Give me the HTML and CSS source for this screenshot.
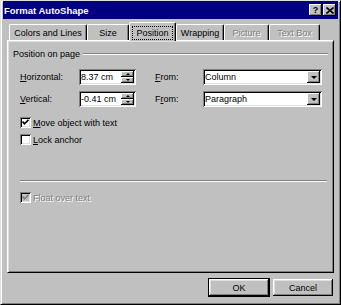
FILE: index.html
```html
<!DOCTYPE html>
<html>
<head>
<meta charset="utf-8">
<link rel="stylesheet" href="styles.css">
</head>
<body>
<div class="window">
  <div class="titlebar">
    <span class="title">Format AutoShape</span>
    <div class="tb-buttons">
      <span class="tb-btn help">?</span>
      <span class="tb-btn close"><svg width="8" height="7" viewBox="0 0 8 7"><path d="M0.5 0.5 L7.5 6.5 M7.5 0.5 L0.5 6.5" stroke="#000" stroke-width="1.6"/></svg></span>
    </div>
  </div>
  <div class="content">
    <div class="tabs">
      <div class="tab t-colors">Colors and Lines</div>
      <div class="tab t-size">Size</div>
      <div class="tab t-pos sel"><span class="focus">Position</span></div>
      <div class="tab t-wrap">Wrapping</div>
      <div class="tab t-pic disabled">Picture</div>
      <div class="tab t-text disabled">Text Box</div>
    </div>
    <div class="panel">
      <div class="group-head"><span>Position on page</span><div class="etch"></div></div>
      <div class="field-row first">
        <span class="lbl"><u>H</u>orizontal:</span>
        <div class="spin-field"><span class="val">8.37 cm</span>
          <div class="spinner"><div class="spin-btn"><i class="up"></i></div><div class="spin-btn"><i class="down"></i></div></div>
        </div>
        <span class="from"><u>F</u>rom:</span>
        <div class="combo"><span class="val">Column</span><div class="drop"><i class="down big"></i></div></div>
      </div>
      <div class="field-row second">
        <span class="lbl"><u>V</u>ertical:</span>
        <div class="spin-field"><span class="val">-0.41 cm</span>
          <div class="spinner"><div class="spin-btn"><i class="up"></i></div><div class="spin-btn"><i class="down"></i></div></div>
        </div>
        <span class="from">F<u>r</u>om:</span>
        <div class="combo"><span class="val">Paragraph</span><div class="drop"><i class="down big"></i></div></div>
      </div>
      <div class="check-row c1">
        <span class="cbox"><svg width="7" height="7" viewBox="0 0 7 7"><path d="M0.5 2.5 L2.5 4.8 L6.5 0.8" fill="none" stroke="#000" stroke-width="1.7"/></svg></span>
        <span><u>M</u>ove object with text</span>
      </div>
      <div class="check-row c2">
        <span class="cbox"></span>
        <span><u>L</u>ock anchor</span>
      </div>
      <div class="sep"></div>
      <div class="check-row c3 disabled">
        <span class="cbox dis"><svg width="7" height="7" viewBox="0 0 7 7"><path d="M0.5 2.5 L2.5 4.8 L6.5 0.8" fill="none" stroke="#808080" stroke-width="1.7"/></svg></span>
        <span>Float over text</span>
      </div>
    </div>
    <div class="buttons">
      <div class="btn default">OK</div>
      <div class="btn">Cancel</div>
    </div>
  </div>
</div>
</body>
</html>
```

FILE: styles.css
```css
* { box-sizing: border-box; }
body {
  margin: 0;
  background: #c0c0c0;
  font-family: "Liberation Sans", Arial, sans-serif;
  font-size: 9px;
  color: #000;
}
u { text-decoration: underline; text-underline-offset: 1px; }
.window {
  width: 341px;
  height: 305px;
  background: #c0c0c0;
  border: 1px solid;
  border-color: #dfdfdf #000 #000 #dfdfdf;
  box-shadow: inset 1px 1px #fff, inset -1px -1px #808080;
  padding: 0 2px 2px 2px;
  display: flex;
  flex-direction: column;
}
.titlebar {
  height: 18px;
  flex: none;
  background: #000080;
  display: flex;
  align-items: center;
  justify-content: space-between;
  padding: 0 2px 0 1px;
  color: #fff;
  font-weight: bold;
  font-size: 9.5px;
}
.tb-buttons { display: flex; gap: 1px; }
.tb-btn {
  width: 13px;
  height: 12px;
  background: #c0c0c0;
  color: #000;
  display: flex;
  align-items: center;
  justify-content: center;
  box-shadow: inset -1px -1px #000, inset 1px 1px #fff, inset -2px -2px #808080;
  font-size: 9px;
  font-weight: bold;
  line-height: 1;
}
.content {
  flex: 1;
  padding: 3px 4px 0 4px;
  display: flex;
  flex-direction: column;
}
.tabs {
  display: flex;
  align-items: flex-end;
  height: 18px;
  padding-left: 2px;
  flex: none;
}
.tab {
  height: 16px;
  display: flex;
  align-items: center;
  justify-content: center;
  border-left: 1px solid #fff;
  border-top: 1px solid #fff;
  border-right: 1px solid #000;
  border-top-left-radius: 2px;
  border-top-right-radius: 2px;
  box-shadow: inset -1px 0 #808080;
  background: #c0c0c0;
}
.t-colors { width: 78px; }
.t-size { width: 42px; }
.t-pos { width: 47px; }
.t-wrap { width: 48px; }
.t-pic { width: 45px; }
.t-text { width: 51px; }
.tab.sel {
  height: 19px;
  margin-bottom: -1px;
  padding-top: 1px;
  position: relative;
  z-index: 1;
}
.focus { outline: 1px dotted #000; padding: 1px 3px; }
.disabled, .tab.disabled { color: #808080; text-shadow: 1px 1px #fff; }
.panel {
  flex: none;
  height: 233px;
  border: 1px solid;
  border-color: #fff #000 #000 #fff;
  box-shadow: inset 1px 1px #dfdfdf, inset -1px -1px #808080;
  padding: 7px 5px 0 5px;
  display: flex;
  flex-direction: column;
}
.group-head {
  display: flex;
  align-items: center;
  height: 12px;
  gap: 3px;
}
.etch {
  flex: 1;
  height: 2px;
  border-top: 1px solid #808080;
  border-bottom: 1px solid #fff;
}
.field-row {
  display: flex;
  align-items: center;
  height: 16px;
  margin-left: 7px;
}
.field-row.first { margin-top: 9px; }
.field-row.second { margin-top: 6px; }
.lbl { width: 59px; }
.from { width: 48px; margin-left: 19px; }
.spin-field, .combo {
  height: 16px;
  background: #fff;
  box-shadow: inset 1px 1px #808080, inset -1px -1px #fff, inset 2px 2px #000, inset -2px -2px #dfdfdf;
  padding: 2px;
  display: flex;
  align-items: center;
}
.spin-field { width: 57px; }
.combo { width: 119px; }
.val { padding-left: 0; }
.spinner {
  margin-left: auto;
  width: 13px;
  height: 12px;
  display: flex;
  flex-direction: column;
}
.spin-btn, .drop {
  background: #c0c0c0;
  box-shadow: inset -1px -1px #000, inset 1px 1px #fff, inset -2px -2px #808080;
  display: flex;
  align-items: center;
  justify-content: center;
}
.spin-btn { flex: 1; }
.drop { margin-left: auto; width: 13px; height: 12px; }
i.up, i.down { display: block; width: 0; height: 0; border-left: 2px solid transparent; border-right: 2px solid transparent; }
i.up { border-bottom: 2px solid #000; }
i.down { border-top: 2px solid #000; }
i.down.big { border-left-width: 3px; border-right-width: 3px; border-top-width: 3px; }
.check-row {
  display: flex;
  align-items: center;
  gap: 2px;
  height: 15px;
  margin-left: 7px;
}
.check-row.c1 { margin-top: 8px; }
.check-row.c2 { margin-top: 2px; }
.check-row.c3 { margin-top: 8px; }
.cbox {
  width: 11px;
  height: 11px;
  background: #fff;
  box-shadow: inset 1px 1px #808080, inset -1px -1px #fff, inset 2px 2px #000, inset -2px -2px #dfdfdf;
  display: flex;
  align-items: center;
  justify-content: center;
  flex: none;
}
.cbox.dis { background: #c0c0c0; }
.cbox svg { display: block; }
.sep {
  height: 2px;
  border-top: 1px solid #808080;
  border-bottom: 1px solid #fff;
  margin: 33px 1px 0 7px;
}
.buttons {
  display: flex;
  justify-content: flex-end;
  align-items: flex-start;
  gap: 3px;
  margin-top: 5px;
  padding-right: 1px;
}
.btn {
  width: 60px;
  height: 17px;
  margin-top: 1px;
  background: #c0c0c0;
  box-shadow: inset -1px -1px #000, inset 1px 1px #fff, inset -2px -2px #808080, inset 2px 2px #dfdfdf;
  display: flex;
  align-items: center;
  justify-content: center;
}
.btn.default {
  width: 62px;
  height: 19px;
  margin-top: 0;
  border: 1px solid #000;
}
```
